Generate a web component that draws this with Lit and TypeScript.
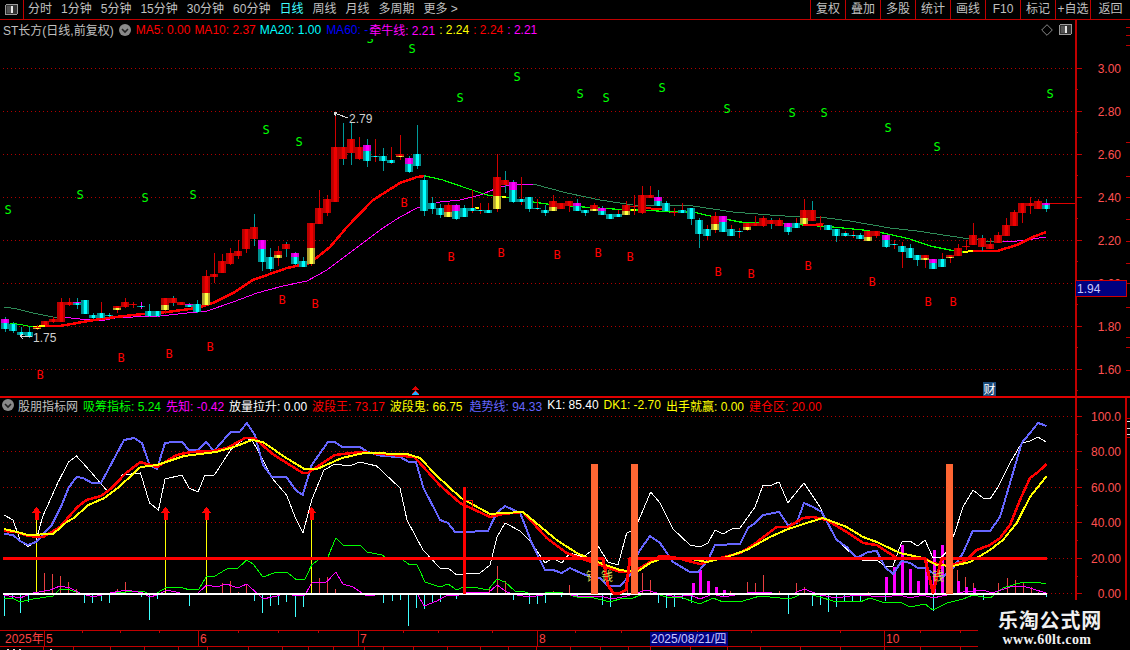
import { LitElement, html, svg, css } from "lit";
import { customElement } from "lit/decorators.js";

type P = number[];
const pts = (a: P) => {
  const o: string[] = [];
  for (let i = 0; i < a.length; i += 2) o.push(a[i] + "," + a[i + 1]);
  return o.join(" ");
};
const line = (a: P, c: string, w = 1) =>
  svg`<polyline points=${pts(a)} fill="none" stroke=${c} stroke-width=${w} stroke-linejoin="round"/>`;

// candles: [zoom x, body top, body bottom, wick top, wick bottom, kind], zoom units of 1/3 px
type Seg = { bx: number; rows: [number, number, number, number, number, string][] };
const CANDLES: Seg[] = [
  { bx: 0, rows: [
    [14,567,597,560,605,"m"],[38,582,603,575,610,"c"],[62,606,615,590,625,"c"],[86,606,620,590,625,"c"],
    [110,590,597,585,600,"y"],[134,573,585,573,585,"r"],[158,567,576,560,580,"r"],[182,516,576,504,576,"r"],
    [206,516,525,504,528,"r"],[230,516,525,504,537,"m"],[254,510,552,510,552,"c"],[278,555,564,550,566,"c"],
    [302,549,564,516,570,"C"],[326,555,558,550,562,"c"],[350,528,540,528,549,"y"],[374,516,531,504,534,"r"],
    [398,522,525,516,534,"r"],[422,528,531,516,537,"M"],[446,543,558,522,560,"c"],[470,543,558,543,560,"c"],
    [494,504,540,504,552,"y"],[518,504,519,498,528,"R"],[542,516,525,516,525,"r"],[566,522,530,518,532,"m"],
    [590,522,546,510,549,"c"],[618,438,525,420,528,"y"],[642,432,441,370,459,"r"],[666,393,429,372,429,"r"],
    [690,370,402,355,405,"r"],[714,363,378,330,387,"r"],[738,297,357,297,368,"r"],[762,291,327,252,348,"R"],
    [786,330,396,330,423,"m"],[810,381,417,354,423,"c"],[834,363,384,348,408,"y"],[858,342,357,336,381,"R"],
    [885,369,402,366,405,"m"],[910,393,411,382,412,"c"],[934,279,402,279,408,"y"],[958,234,282,180,282,"r"],
    [982,207,249,195,258,"r"],[1006,51,216,-51,216,"r"],[1030,51,87,-21,105,"R"],[1054,27,69,-21,105,"R"],
    [1078,51,87,20,90,"r"],[1102,45,93,27,111,"m"],[1126,78,81,27,96,"C"],[1150,78,93,54,123,"c"],
    [1174,90,99,51,102,"C"],[1200,72,80,15,90,"y"],[1226,84,126,78,129,"m"],[1250,72,108,-15,117,"c"],
  ]},
  { bx: 400, rows: [
    [73,150,243,135,258,"c"],[97,219,237,201,252,"c"],[121,234,255,222,264,"c"],[145,225,261,219,262,"y"],
    [169,225,267,222,270,"m"],[193,234,261,226,262,"c"],[217,234,243,180,250,"C"],[241,240,243,220,252,"C"],
    [265,240,249,220,250,"C"],[292,141,237,72,246,"y"],[316,150,165,123,189,"R"],[340,156,216,150,218,"m"],
    [364,207,216,141,225,"C"],[388,201,237,201,246,"c"],[412,234,237,207,240,"C"],[436,240,249,225,258,"c"],
    [460,213,243,195,244,"y"],[484,219,237,219,238,"r"],[508,213,228,213,246,"r"],[532,219,243,207,244,"m"],
    [556,240,249,240,258,"c"],[583,225,243,219,244,"y"],[607,234,255,228,256,"m"],[631,252,267,252,268,"c"],
    [655,252,261,240,262,"C"],[679,225,255,213,256,"y"],[703,228,231,195,255,"r"],[727,195,249,168,252,"r"],
    [751,195,204,168,205,"r"],[775,201,228,180,229,"m"],[799,219,243,213,244,"c"],[823,246,249,234,258,"r"],
    [847,240,249,219,250,"C"],[874,234,267,234,285,"c"],[898,270,312,264,354,"c"],[922,297,318,285,330,"C"],
    [946,258,300,246,309,"y"],[970,258,306,258,307,"m"],[994,297,318,285,319,"C"],[1018,303,306,295,324,"C"],
    [1042,279,300,279,302,"y"],[1066,279,288,258,289,"r"],
  ]},
  { bx: 750, rows: [
    [39,264,288,258,290,"r"],[63,270,282,264,297,"R"],[87,270,288,264,289,"r"],[115,279,306,279,315,"m"],
    [139,279,294,264,295,"C"],[163,240,282,207,283,"y"],[187,240,273,213,274,"R"],[211,279,282,258,300,"r"],
    [235,285,300,285,301,"c"],[259,297,318,297,336,"c"],[285,309,318,303,320,"C"],[309,315,318,303,324,"C"],
    [331,315,327,309,328,"c"],[355,303,333,303,334,"y"],[379,303,318,303,324,"r"],[407,315,351,315,354,"m"],
    [431,342,345,330,357,"C"],[455,348,366,336,414,"C"],[479,354,384,342,385,"c"],[501,375,390,375,408,"c"],
    [525,375,390,375,414,"y"],[549,387,417,387,418,"m"],[575,387,411,369,412,"C"],[599,375,384,375,399,"y"],
    [623,354,378,342,379,"r"],[647,348,351,330,360,"r"],[670,315,345,279,346,"r"],[696,324,351,315,363,"R"],
    [720,342,357,324,358,"r"],[744,315,339,306,340,"r"],[768,285,318,264,319,"r"],[792,246,288,240,289,"r"],
    [816,219,249,219,279,"r"],[840,219,228,201,252,"r"],[864,213,237,207,238,"r"],[889,219,237,207,246,"m"],
  ]},
];

const renderCandles = () =>
  CANDLES.flatMap((s) =>
    s.rows.map(([zx, t, b, wt, wb, k]) => {
      const x = Math.round(s.bx + zx / 3);
      const y = (v: number) => Math.round(130 + v / 3);
      const top = y(t), bot = Math.max(y(b), top + 1), h = bot - top;
      const teal = "cmCM".includes(k) ? k !== "C" && k !== "M" : k === "R";
      const wick = teal ? "#009a9a" : k === "M" ? "#ff00ff" : "#d00000";
      const wickLine = svg`<rect x=${x} y=${y(wt)} width="1" height=${y(wb) - y(wt)} fill=${wick}/>`;
      const rect = (yy: number, hh: number, g: string) =>
        svg`<rect x=${x - 4} y=${yy} width="8" height=${hh} fill=${"url(#" + g + ")"}/>`;
      const kind = k.toLowerCase();
      if (kind === "m") {
        const sp = Math.round(h * 0.4);
        return svg`${wickLine}${rect(top, sp, "gm")}${rect(top + sp, h - sp, "gc")}`;
      }
      if (kind === "y") {
        const sp = Math.round(h * 0.6);
        return svg`${wickLine}${rect(top, sp, "gr")}${rect(top + sp, h - sp, "gy")}`;
      }
      return svg`${wickLine}${rect(top, h, kind === "c" ? "gc" : "gr")}`;
    })
  );

const grad = (id: string, edge: string, mid: string) => svg`
  <linearGradient id=${id} x1="0" x2="1" y1="0" y2="0">
    <stop offset="0" stop-color=${edge}/><stop offset="0.3" stop-color=${edge}/>
    <stop offset="0.35" stop-color=${mid}/><stop offset="0.7" stop-color=${mid}/>
    <stop offset="0.75" stop-color=${edge}/><stop offset="1" stop-color=${edge}/>
  </linearGradient>`;

const S_MARKS = [[8,209],[80,194],[145,197],[193,194],[266,129],[299,141],[370,38.5],[412,48],[460,97],[517,76],[580,93],[606,97],[662,87],[727,108],[792,112],[824,112],[888,127],[937,146],[1050,93]];
const B_MARKS = [[40,374],[121,357],[169,353],[210,346],[282,299],[315,303],[404,202],[451,256],[501,252],[557,254],[598,252],[630,256],[718,271],[751,273],[808,265],[872,281],[928,301],[953,301]];
const GRID_MAIN = [[68,"3.00"],[111.5,"2.80"],[154.5,"2.60"],[197.5,"2.40"],[240.5,"2.20"],[283.5,"2.00"],[326.5,"1.80"],[369.5,"1.60"]] as [number,string][];
const GRID_LOW = [[416.5,"100.0"],[451.5,"80.00"],[487.5,"60.00"],[522.5,"40.00"],[558.5,"20.00"],[593.5,"0.00"]] as [number,string][];

const DARK_A1 = [4,307,17,309,33,313,53,317,62,317];
const MAG_A = [62,317,80,319,100,321,115,318,133,317,160,316,187,313,207,311,233,302,257,293,283,286,307,281,327,270,347,255,367,240,383,228,400,217,417,208,440,202,460,200,480,195,500,187,517,184,533,184];
const DARK_A2 = [533,184,567,193,600,200,633,205,693,206,733,212,770,215,800,217,827,218,850,221,890,228,917,231,950,236,963,238,985,241,1003,241];
const MAG_A2 = [1003,241,1017,241,1033,239,1046,237];
const RED_B = [45,326,60,326,100,319,133,315,167,312,197,308,213,303,233,293,253,280,287,268,310,263,330,247,347,227,373,200,400,183,417,177,425,176];
const GREEN_B = [425,176,443,180,463,187,487,195,510,198,533,202,547,204,583,207,613,209,627,210,645,210,670,212,693,212,710,216,740,222,755,222.7,785,223.5,803,225,833,227,863,230,883,233,910,239,930,246,950,250,963,252];
const RED_C = [973,251,997,251,1017,245,1033,237,1046,232];

const WHITE = [4,515,13,520,20,540,28,547,36,541,42.5,517,57.7,483,68.5,462,76.4,456,86.5,467,97,479,108,492,122.5,475,140.5,473,149.5,503,158.5,510,165,479,182,475,189,488,198,492,205,475,214.4,475,230.6,450,245,438,252,440,263,460,272,478,286.5,495,295.5,518,303,533,311.7,500,324,470,335,464,349.5,466,360,462,376.6,466,400,488,407,520,423,550,440,568,448,568,456.7,575,470,573,480,573,490,565,497,537,505,523,520,531,531.7,543,545,563,553,558,561.7,563,570,553,583,557,598,546,608,562,618,565,626.7,533,635,529,650.7,492,660,503,673,529,690,545,700,547,708,543,715,530,723,534,731.7,529,740,528,755,507,763,485,771.7,485,779,482,788,503,790,500,804,483,820,507,836.7,540,853,555,861.7,560,876.7,560,886.7,567,893,566,901.7,542,910,541,917.7,546,925,540,933,558,941.7,557,948,550,955,532,963,507,973,490,983,498,990,499,998,487,1010,463,1021.7,443,1030,441,1038,437,1046,442];
const BLUE = [4,534,13,535,20,541,28,545,36,542,51.7,525,61.7,505,68.5,488,76.4,477,83,478,92,483,101,483,108,470,124,440,134,438,142,443,149.5,465,157,469,165,443,173,442,182,442,189,450,198,450,206,442,214,451,230.6,432,239.6,432,246.8,423,254.8,435,263,465,272,477,286.5,477,295.5,490,302.7,495,311.7,465,328,442,335,442,342,447,360,447,367.6,452,382,456,400,457,409,462,416,462,423.4,488,435,510,440,520,448,523,455,532,463,532,488,531,496.7,513,505,506,520,513,525,525,531.7,543,545,570,553,570,561.7,573,570,568,583,574,591.7,577,600,578,608,586,620,586,630,575,638,553,650,536,660,543,673,562,690,572,698,572,708,560,715,545,740,544,748,528,755,523,763,515,779,512,788,525,796.7,523,804,503,813,507,821.7,512,836.7,540,846.7,547,856.7,558,868,552,876.7,551,885,567,893,574,901.7,561,910,563,918,568,925,568,933,573,943,577,953,568,963,553,972.7,531,990,531,1000,517,1010,483,1021.7,443,1030,433,1038,423,1046.7,426];
const RED_L = [4,531,17,532,28,536,43,537,60,527,68.5,517,77.5,507,86.5,500,101,496,111.7,488,126,473,140.5,462,157,467,176.6,455,191,452,212.6,451,227,448,245,438,254,438,274,455,302.7,473,308,473,335,455,360,452,414.4,457,439.6,485,460,503,490,517,503,514,523,512,546.7,538,566.7,553,580,558,600,565,620,572,633,572,650,562,660,556,673,557,700,564,713,560,740,553,753,545,776.7,527,788,527,803,518,813,517,826.7,520,846.7,532,863,543,876.7,545,896.7,558,910,559,923,558,933,563,950,566,966.7,560,976.7,550,990,545,1000,538,1010,525,1020,500,1030,478,1038,472,1046.7,464];
const YEL_L = [4,529,17,532,28,535,53,534,66.7,522,73.9,518,88.3,505,104.5,498,119,487,140.5,467,157,465,184,456,216,452,234,447,252,440,263,442,284.7,457,304.5,469,317,469,342,458,364,453,407,454,420,458,436,475,461,498,490,514,503,513,523,512,535,522,556.7,540,576.7,553,600,563,620,570,636.7,572,650,563,663,558,686.7,558,706.7,562,726.7,557,746.7,550,770,537,788,529,806.7,523,823,518,846.7,527,863,537,876.7,542,900,553,923,558,936.7,565,953,566,970,562,990,550,1003,540,1016.7,523,1030,497,1046.7,476];
const GREEN_L = [4,599,12,598,20,602,33,599,53,596,60,589,66.7,589,80,593,110,593,143,591,150,595,157,593,167,587,183,588,190,590,199,589,206.7,576,215,576,226.7,569,238,568,246.7,560,253,564,263,577,276.7,572,286.7,572,296.7,580,305,579,311.7,565,318,560,328,557,335.7,538,343,545,360,545,366.7,552,381.7,555,386.7,558,400,558,410,565,416.7,564,425,582,440,587,448,584,456.7,590,463,587,473,587,488,590,497,579,505,582,515,591,523,591,530,594,545,593,560,592,576.7,597,590,597,610,602,623,598,633,598,643,594,656.7,594,666.7,597,680,597,700,604,713,598,723,602,743,601,760,596,770,597,790,599,804,593,820,597,833,601,860,602,870,598,885,603,900,602,910,607,925,604,933,610,946.7,603,963,599,973,595,983,597,991.7,597,1003,588,1023,582,1036.7,582,1046,584];
const MAG_L = [4,595,20,598,33,593,50,590,60,586,70,588,80,593,93,597,110,593,126.7,590,143,593,150,597,157,595,167,590,180,593,197,594,206.7,585,216.7,587,226.7,584,238,588,246.7,584,256.7,593,263,599,276.7,596,286.7,593,295,596,305,595,311.7,583,326.7,582,335.7,572,343,584,353,587,366.7,596,393,593,406.7,595,416.7,593,424.3,606,436.7,601,448,595,456.7,596,465,592,488,593,497,585,506.7,592,516.7,595,530,597,543,595,560,593,576.7,596,600,596,611.7,599,626.7,596,646.7,590,656.7,593,676.7,597,690,595,700,599,713,594,723,597,746.7,593,763.3,592,780,594,790,595,804,589,820,595,836.7,598,856.7,595,885,597,900,595,910,598,923,595,933,598,946.7,595,963,592,983,590,991.7,593,1013,586,1023,586,1046,593];
const SPIKES = [3,558.5,603,558.5,608,585,613,593,620,593,626,590,630,558.5,925,558.5,933,593,941.7,558.5,1047,558.5];

const RED_BARS = [[44,573],[52,574],[60,576],[68,582],[76,589],[117,589],[125,582],[222,583],[230,581],[238,592],[246,584],[319,578],[327,577],[335,589],[489,587],[497,566],[505,581],[553,591],[569,585],[627,567],[642,573],[650,580],[730,591],[747,582],[755,583],[763,575],[779,591],[796,583],[804,587],[868,592],[957,570],[965,577],[973,583],[998,583],[1007,578],[1015,580],[1023,583],[1031,587],[1038,592]];
const CYAN_BARS = [[4,616],[12,598],[20,613],[28,602],[84,603],[92,603],[101,601],[109,603],[141,597],[149,620],[157,599],[189,606],[254,601],[262,613],[270,606],[278,605],[286,602],[295,617],[303,607],[343,595],[383,603],[392,601],[400,600],[408,626],[416,608],[424,609],[432,602],[440,602],[456,599],[513,600],[529,604],[537,604],[545,603],[561,597],[577,597],[602,605],[610,607],[658,603],[666,608],[674,607],[682,599],[691,603],[723,597],[788,614],[812,606],[820,605],[828,612],[836,607],[844,601],[852,601],[860,602],[885,601],[933,611],[983,600],[1046,597]];
const MAG_BARS = [[692,583],[699,570],[707,581],[715,587],[723,590],[885,577],[893,567],[901,545],[909,569],[917,581],[925,560],[933,550],[941,545],[957,581],[965,587],[973,588]];
const MINOR_TICKS_R = [27,35,45,142,176,197,219,241,263,283,307,337,347,370];

const TABS = ["分时","1分钟","5分钟","15分钟","30分钟","60分钟","日线","周线","月线","多周期","更多 >"];
const BUTTONS = ["复权","叠加","多股","统计","画线","F10","标记","+自选","返回"];

@customElement("app-root")
export class AppRoot extends LitElement {
  static styles = css`
    :host { display: block; width: 1130px; height: 650px; background: #000; overflow: hidden; position: relative;
      font: 12px "Liberation Sans", "Noto Sans CJK SC", sans-serif; color: #c0c0c0; }
    svg { display: block; }
    svg text { font-family: "Liberation Sans", "Noto Sans CJK SC", sans-serif; font-size: 12px; }
    svg text.mark { font-family: "DejaVu Sans Mono", monospace; font-size: 12px; text-anchor: middle; }
    .bar { display: flex; height: 20px; box-sizing: border-box; border-bottom: 1px solid #c00000; align-items: center; }
    .logo { width: 24px; height: 19px; box-sizing: border-box; border-right: 1px solid #c00000; display: flex; align-items: center; justify-content: center; }
    .tabs { display: flex; gap: 9px; padding-left: 4px; line-height: 19px; }
    .tab.on { color: #40ffff; }
    .btns { display: flex; margin-left: auto; height: 19px; }
    .btn { width: 35px; box-sizing: border-box; border-left: 1px solid #c00000; text-align: center; line-height: 19px; }
    .btn:last-child { width: 40px; }
    .panel { position: relative; }
    .main { height: 378px; border-bottom: 2px solid #e00000; box-sizing: border-box; }
    .low { height: 232px; }
    .legend { position: absolute; left: 0; top: 0; display: flex; align-items: center; gap: 4px; height: 19px; padding-left: 3px; white-space: nowrap; }
    .legend.top { width: 1075px; box-sizing: border-box; background: #000; }
    .legend.top .dot { margin: 0 1px 0 1px; }
    .legend .ends { margin-left: auto; display: flex; gap: 6px; align-items: center; padding-right: 2px; }
    .low .legend { height: 14px; gap: 5px; padding-left: 2px; }
    .low .legend .dot { margin-right: -1px; }
    .red { color: #ff0000; } .cyan { color: #00ffff; } .blue { color: #0000ff; } .mag { color: #ff00ff; }
    .yel { color: #ffff00; } .grn { color: #00ff00; } .wht { color: #ffffff; } .per { color: #6666ff; margin-left: 2px; }
    .ma60 { margin-left: 1px; margin-right: -3px; }
    .mark-logo { position: absolute; left: 978px; top: 602px; width: 152px; height: 48px; background: #000; text-align: center; color: #f0f0f0; }
    .wm1 { font: bold 20px "Noto Sans CJK SC", sans-serif; line-height: 26px; margin-top: 5px; letter-spacing: 0.8px; padding-right: 8px; }
    .wm2 { font: bold 14px "Liberation Serif", serif; line-height: 14px; letter-spacing: 0.4px; padding-right: 14px; }
  `;

  private panelIcon() {
    return html`<svg width="14" height="12" viewBox="0 0 14 12" shape-rendering="crispEdges">
      <rect x="0.5" y="0.5" width="12" height="10" rx="1.5" fill="#333" stroke="#9a9a9a"/>
      <rect x="2" y="2" width="4" height="7" fill="#555"/><rect x="6" y="2" width="2" height="7" fill="#e8e8e8"/>
    </svg>`;
  }
  private dot() {
    return html`<svg class="dot" width="12" height="12" viewBox="0 0 12 12">
      <circle cx="6" cy="6" r="6" fill="#8a8a8a"/><path d="M3 5l3 3 3-3" fill="none" stroke="#222" stroke-width="1.6"/>
    </svg>`;
  }

  private mainChart() {
    const gridLines = GRID_MAIN.map(([y, t]) => svg`
      <line x1="3" x2="1075" y1=${y} y2=${y} stroke="#b00000" stroke-dasharray="1 3"/>
      <rect x="1075" y=${Math.floor(y)} width="7" height="1" fill="#c00000"/>
      <rect x="1075" y=${Math.floor(y) + 21} width="3" height="1" fill="#c00000"/>
      <text x="1121" y=${y + 4.5} text-anchor="end" fill="#ff5050">${t}</text>`);
    return html`<svg width="1130" height="376" viewBox="0 20 1130 376" shape-rendering="crispEdges">
      <defs>${grad("gr", "#b80000", "#f00000")}${grad("gc", "#008f8f", "#00ffff")}${grad("gm", "#d000d0", "#ff00ff")}${grad("gy", "#b0a030", "#ffff40")}</defs>
      ${gridLines}
      ${line(DARK_A1, "#2e8b57")}${line(MAG_A, "#ff00ff")}${line(DARK_A2, "#2e8b57")}${line(MAG_A2, "#ff00ff")}
      ${line([10,323,23,325,33,327], "#00ff00")}${line([33,327,45,326], "#ffff00", 2)}
      ${line(RED_B, "#ff0000", 2.5)}${line(GREEN_B, "#00ff00", 1.2)}
      ${line([963,252,973,251], "#ffff00", 2)}${line(RED_C, "#ff0000", 2.5)}
      ${line([645,208,670,210], "#ff0000", 2)}${line([803,225,823,225], "#ff0000", 2)}
      ${line([475,208,479,208], "#ffff00", 2)}${line([502,197,506,197], "#ffff00", 2)}${line([631,210,636,210], "#ffff00", 2)}
      ${renderCandles()}
      ${S_MARKS.map(([x, y]) => svg`<text class="mark" x=${x} y=${y + 4.5} fill="#00ff00">S</text>`)}
      ${B_MARKS.map(([x, y]) => svg`<text class="mark" x=${x} y=${y + 4.5} fill="#ff0000">B</text>`)}
      <path d="M334 113l3-1M334 113l2 3M334 113l14 5" fill="none" stroke="#d8d8d8"/>
      <text x="349" y="123" fill="#d0d0d0">2.79</text>
      <path d="M20 336h12M20 336l3-2M20 336l3 3" fill="none" stroke="#d8d8d8"/>
      <text x="33" y="342" fill="#d0d0d0">1.75</text>
      <line x1="1050" x2="1075" y1="203.5" y2="203.5" stroke="#e00000"/>
      <rect x="1075" y="20" width="2" height="376" fill="#c00000"/>
      ${MINOR_TICKS_R.map((y) => svg`<rect x="1126" y=${y} width="4" height="1" fill="#c00000"/>`)}
      <rect x="1075.5" y="280.5" width="51" height="16" fill="#000080" stroke="#d00000"/>
      <text x="1077" y="293" fill="#c8c8ff">1.94</text>
      <rect x="983" y="382" width="13" height="14" fill="#1a4a7a"/>
      <text x="983.5" y="394" fill="#fff">财</text>
      <path d="M415 386l-4 4h8zM415 390l-4 4h8z" fill="#e00000"/>
      <path d="M415 391l-4 4h8z" fill="#20b0ff"/>
    </svg>`;
  }

  private lowChart() {
    const gridLines = GRID_LOW.map(([y, t], i) => svg`
      <line x1="3" x2="1075" y1=${y} y2=${y} stroke="#b00000" stroke-dasharray="1 3"/>
      <rect x="1075" y=${Math.floor(y)} width="7" height="1" fill="#c00000"/>
      ${i < 5 ? svg`<rect x="1075" y=${Math.floor(y) + 18} width="3" height="1" fill="#c00000"/>` : ""}
      <text x="1121" y=${y + 4.5} text-anchor="end" fill="#ff5050">${t}</text>`);
    const arrow = (x: number) => svg`
      <rect x=${x} y="519" width="1" height="75" fill="#ffff00"/>
      <path d=${`M${x + 0.5} 507l5 6h-3v7h-4v-7h-3z`} fill="#ff0000"/>`;
    return html`<svg width="1130" height="232" viewBox="0 398 1130 232" shape-rendering="crispEdges">
      ${gridLines}
      <rect x="1075" y="398" width="2" height="202" fill="#c00000"/>
      <rect x="1125" y="398" width="2" height="202" fill="#c00000"/>
      <rect x="1127" y="418" width="3" height="1" fill="#c00000"/><rect x="1127" y="437" width="3" height="1" fill="#c00000"/>
      ${[421, 428, 434].map((y) => svg`<rect x="1127" y=${y} width="3" height="1" fill="#e0e0e0"/>`)}
      ${RED_BARS.map(([x, y]) => svg`<rect x=${x} y=${y} width="1" height=${594 - y} fill="#e84040"/>`)}
      ${CYAN_BARS.map(([x, y]) => svg`<rect x=${x} y="594" width="1" height=${y - 594} fill="#40ffff"/>`)}
      ${MAG_BARS.map(([x, y]) => svg`<rect x=${x} y=${y} width="3" height=${594 - y} fill="#ff00ff"/>`)}
      ${[36, 165, 206, 311].map(arrow)}
      ${line(WHITE, "#ffffff")}
      ${line(GREEN_L, "#00ff00")}${line(MAG_L, "#ff00ff")}
      <rect x="3" y="593" width="1044" height="1.5" fill="#ffffff"/>
      ${line(BLUE, "#6666ff", 2)}${line(RED_L, "#ff0000", 2.5)}${line(YEL_L, "#ffff00", 2)}
      ${line(SPIKES, "#ff0000", 3)}
      <text x="586" y="581" fill="#d0d050">钱</text><text x="601" y="581" fill="#d0d050">钱</text>
      <text x="932" y="581" fill="#d0d050">钱</text>
      <rect x="463" y="487" width="3" height="107" fill="#ff0000"/>
      <rect x="464.5" y="500.5" width="8" height="7" fill="none" stroke="#ff0000"/>
      <rect x="591" y="512" width="6" height="1" fill="#ff0000"/>
      <rect x="591" y="464" width="7" height="130" fill="#ff6633"/>
      <rect x="631" y="464" width="7" height="130" fill="#ff6633"/>
      <rect x="946" y="464" width="7" height="130" fill="#ff6633"/>
    </svg>`;
  }

  private dateStrip() {
    const topTicks = [82,120,159,238,278,318,403,438,492,575,621,697,751,840,920,960];
    const lowTicks = [43,73,110,144,178,207,248,282,308,333,364,383,413,447,480,508,536,570,600,628,650,690,727,760,800,840,884,920,960];
    const divs: [number, string][] = [[44,"5"],[198,"6"],[358,"7"],[537,"8"],[884,"10"]];
    return html`<svg width="1130" height="20" viewBox="0 630 1130 20" shape-rendering="crispEdges">
      <rect x="0" y="630" width="1130" height="1" fill="#c00000"/>
      <rect x="0" y="646" width="1130" height="1" fill="#c00000"/>
      ${topTicks.map((x) => svg`<rect x=${x} y="631" width="1" height="2" fill="#c00000"/>`)}
      ${lowTicks.map((x) => svg`<rect x=${x} y="647" width="1" height="3" fill="#c00000"/>`)}
      ${divs.map(([x, t]) => svg`<rect x=${x} y="631" width="1" height="15" fill="#c00000"/>
        <text x=${x + 2} y="643" fill="#ff4040">${t}</text>`)}
      <text x="5" y="643" fill="#ff4040">2025年</text>
      <rect x="649.5" y="631.5" width="78" height="14" fill="#000080"/>
      <text x="651" y="643" fill="#c8c8ff">2025/08/21/四</text>
      <rect x="7" y="649" width="2" height="1" fill="#e0e0e0"/><rect x="13" y="649" width="2" height="1" fill="#e0e0e0"/>
      <rect x="19" y="649" width="2" height="1" fill="#e0e0e0"/><rect x="50" y="649" width="2" height="1" fill="#e0e0e0"/>
    </svg>`;
  }

  render() {
    return html`
      <div class="bar">
        <div class="logo">${this.panelIcon()}</div>
        <div class="tabs">${TABS.map((t) => html`<span class="tab ${t === "日线" ? "on" : ""}">${t}</span>`)}</div>
        <div class="btns">${BUTTONS.map((b) => html`<div class="btn">${b}</div>`)}</div>
      </div>
      <div class="panel main">
        ${this.mainChart()}
        <div class="legend top">
          <span>ST长方(日线,前复权)</span>${this.dot()}
          <span class="red">MA5: 0.00</span><span class="red">MA10: 2.37</span>
          <span class="cyan">MA20: 1.00</span><span class="blue ma60">MA60: -</span>
          <span class="mag">牵牛线: 2.21</span><span class="yel">: 2.24</span><span class="red">: 2.24</span><span class="mag">: 2.21</span>
          <div class="ends">
            <svg width="12" height="12" viewBox="0 0 12 12"><path d="M6 .7L11.3 6 6 11.3.7 6z" fill="none" stroke="#8a8a8a"/></svg>
            ${this.panelIcon()}
          </div>
        </div>
      </div>
      <div class="panel low">
        ${this.lowChart()}
        <div class="legend">
          ${this.dot()}<span>股朋指标网</span>
          <span class="grn">吸筹指标: 5.24</span><span class="mag">先知: -0.42</span>
          <span class="wht">放量拉升: 0.00</span><span class="red">波段王: 73.17</span>
          <span class="yel">波段鬼: 66.75</span><span class="per">趋势线: 94.33</span>
          <span class="wht">K1: 85.40</span><span class="yel">DK1: -2.70</span>
          <span class="yel">出手就赢: 0.00</span><span class="red">建仓区: 20.00</span>
        </div>
      </div>
      ${this.dateStrip()}
      <div class="mark-logo"><div class="wm1">乐淘公式网</div><div class="wm2">www.60lt.com</div></div>
    `;
  }
}
